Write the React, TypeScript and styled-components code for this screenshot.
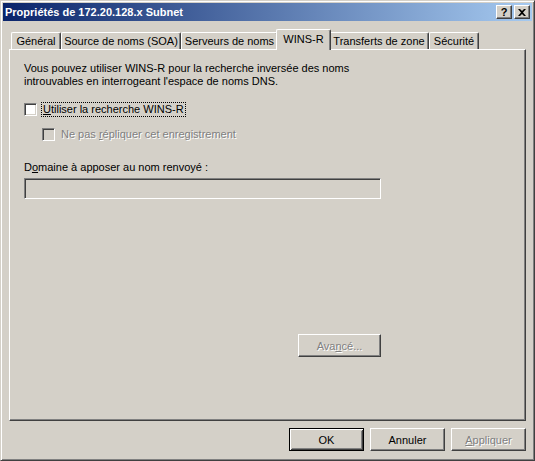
import styled, { createGlobalStyle, css } from 'styled-components';

const GlobalStyle = createGlobalStyle`
  html, body {
    margin: 0;
    padding: 0;
    background: #d4d0c8;
  }
  body {
    font-family: "Liberation Sans", Arial, sans-serif;
    font-size: 11px;
    color: #000;
  }
`;

const raised = css`
  border: 1px solid;
  border-color: #fff #404040 #404040 #fff;
  box-shadow: inset -1px -1px #808080, inset 1px 1px #d4d0c8;
`;

const sunken = css`
  border: 1px solid;
  border-color: #808080 #fff #fff #808080;
  box-shadow: inset 1px 1px #404040, inset -1px -1px #d4d0c8;
`;

const Window = styled.div`
  width: 535px;
  height: 461px;
  box-sizing: border-box;
  background: #d4d0c8;
  border: 1px solid;
  border-color: #d4d0c8 #404040 #404040 #d4d0c8;
  box-shadow: inset 1px 1px #fff, inset -1px -1px #808080;
  padding: 2px;
  display: flex;
  flex-direction: column;
`;

const TitleBar = styled.div`
  height: 18px;
  display: flex;
  align-items: center;
  padding: 0 2px;
  background: linear-gradient(to right, #0a246a, #a6caf0);
  color: #fff;
  font-weight: bold;
  font-size: 11px;
`;

const TitleText = styled.span`
  flex: 1;
  white-space: nowrap;
`;

const TitleButtons = styled.div`
  display: flex;
  gap: 2px;
`;

const TitleButton = styled.div`
  width: 16px;
  height: 14px;
  box-sizing: border-box;
  background: #d4d0c8;
  ${raised};
  display: flex;
  align-items: center;
  justify-content: center;
  color: #000;
  font-weight: bold;
  font-size: 11px;
  line-height: 1;
`;

const Body = styled.div`
  flex: 1;
  display: flex;
  flex-direction: column;
  padding: 8px 6px 0 6px;
`;

const TabStrip = styled.div`
  height: 20px;
  display: flex;
  align-items: flex-end;
  padding-left: 2px;
`;

const Tab = styled.div<{ $w: number; $active?: boolean }>`
  width: ${(p) => p.$w}px;
  height: 17px;
  box-sizing: border-box;
  background: #d4d0c8;
  border-top: 1px solid #fff;
  border-left: 1px solid #fff;
  border-right: 1px solid #404040;
  box-shadow: inset -1px 0 #808080;
  border-radius: 2px 2px 0 0;
  display: flex;
  align-items: center;
  justify-content: center;
  white-space: nowrap;
  padding-bottom: 1px;

  ${(p) =>
    p.$active &&
    css`
      width: ${p.$w + 4}px;
      height: 21px;
      margin: 0 -2px -1px;
      position: relative;
      z-index: 1;
      padding-bottom: 3px;
    `}
`;

const Panel = styled.div`
  height: 372px;
  box-sizing: border-box;
  border: 1px solid;
  border-color: #fff #404040 #404040 #fff;
  box-shadow: inset -1px -1px #808080;
  padding: 12px 0 0 14px;
  display: flex;
  flex-direction: column;
`;

const Content = styled.div`
  width: 357px;
  display: flex;
  flex-direction: column;
`;

const Description = styled.p`
  margin: 0;
  line-height: 13px;
  width: 480px;
`;

const CheckRow = styled.div<{ $indent?: boolean }>`
  display: flex;
  align-items: center;
  height: 15px;
  gap: 4px;
  margin-left: ${(p) => (p.$indent ? 18 : 0)}px;
  margin-top: ${(p) => (p.$indent ? 10 : 14)}px;
`;

const CheckBox = styled.div<{ $disabled?: boolean }>`
  width: 13px;
  height: 13px;
  box-sizing: border-box;
  background: ${(p) => (p.$disabled ? '#d4d0c8' : '#fff')};
  ${sunken};
`;

const Label = styled.span<{ $focus?: boolean; $disabled?: boolean }>`
  line-height: 13px;
  padding: 0 1px;
  border: 1px dotted ${(p) => (p.$focus ? '#000' : 'transparent')};
  white-space: nowrap;
  ${(p) =>
    p.$disabled &&
    css`
      color: #808080;
      text-shadow: 1px 1px #fff;
    `}
`;

const FieldLabel = styled.div`
  margin-top: 19px;
  line-height: 13px;
`;

const TextField = styled.div`
  margin-top: 4px;
  height: 21px;
  box-sizing: border-box;
  background: #d4d0c8;
  ${sunken};
`;

const AdvancedRow = styled.div`
  display: flex;
  justify-content: flex-end;
  margin-top: 135px;
`;

const Button = styled.div<{ $w?: number; $default?: boolean; $disabled?: boolean }>`
  width: ${(p) => p.$w ?? 75}px;
  height: 23px;
  box-sizing: border-box;
  background: #d4d0c8;
  display: flex;
  align-items: center;
  justify-content: center;
  ${(p) =>
    p.$default
      ? css`
          border: 1px solid #000;
          box-shadow: inset 1px 1px #fff, inset -1px -1px #404040,
            inset 2px 2px #d4d0c8, inset -2px -2px #808080;
        `
      : raised}
  ${(p) =>
    p.$disabled &&
    css`
      color: #808080;
      text-shadow: 1px 1px #fff;
    `}
`;

const ButtonRow = styled.div`
  display: flex;
  justify-content: flex-end;
  gap: 6px;
  margin-top: 7px;
`;

const tabs = [
  { label: 'Général', w: 50 },
  { label: 'Source de noms (SOA)', w: 120 },
  { label: 'Serveurs de noms', w: 97 },
  { label: 'WINS-R', w: 51, active: true },
  { label: 'Transferts de zone', w: 100 },
  { label: 'Sécurité', w: 50 },
];

export default function App() {
  return (
    <>
      <GlobalStyle />
      <Window>
        <TitleBar>
          <TitleText>Propriétés de 172.20.128.x Subnet</TitleText>
          <TitleButtons>
            <TitleButton>?</TitleButton>
            <TitleButton>
              <svg width="8" height="7" viewBox="0 0 8 7">
                <path d="M0 0h2l2 2 2-2h2L5 3.5 8 7H6L4 5 2 7H0l3-3.5z" fill="#000" />
              </svg>
            </TitleButton>
          </TitleButtons>
        </TitleBar>
        <Body>
          <TabStrip>
            {tabs.map((t) => (
              <Tab key={t.label} $w={t.w} $active={t.active}>
                {t.label}
              </Tab>
            ))}
          </TabStrip>
          <Panel>
            <Content>
              <Description>
                Vous pouvez utiliser WINS-R pour la recherche inversée des noms
                <br />
                introuvables en interrogeant l'espace de noms DNS.
              </Description>
              <CheckRow>
                <CheckBox />
                <Label $focus>
                  <u>U</u>tiliser la recherche WINS-R
                </Label>
              </CheckRow>
              <CheckRow $indent>
                <CheckBox $disabled />
                <Label $disabled>
                  Ne pas <u>r</u>épliquer cet enregistrement
                </Label>
              </CheckRow>
              <FieldLabel>
                D<u>o</u>maine à apposer au nom renvoyé :
              </FieldLabel>
              <TextField />
              <AdvancedRow>
                <Button $w={83} $disabled>
                  Ava<u>n</u>cé...
                </Button>
              </AdvancedRow>
            </Content>
          </Panel>
          <ButtonRow>
            <Button $default>OK</Button>
            <Button>Annuler</Button>
            <Button $disabled>
              <u>A</u>ppliquer
            </Button>
          </ButtonRow>
        </Body>
      </Window>
    </>
  );
}
